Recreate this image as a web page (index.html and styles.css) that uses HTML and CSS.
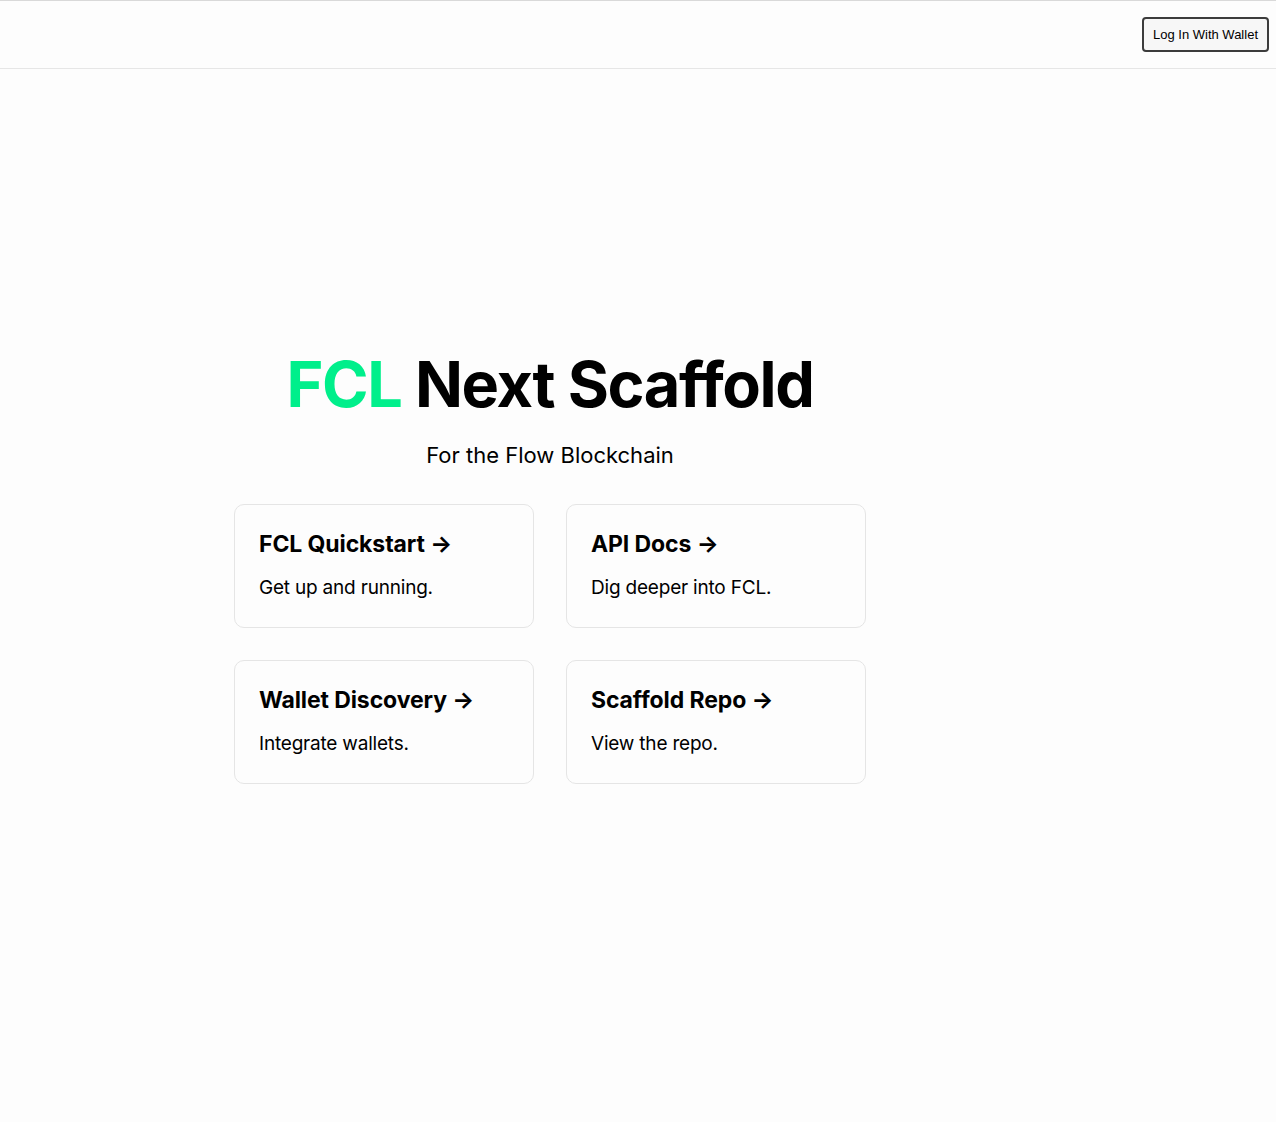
FILE: index.html
```html
<!DOCTYPE html>
<html lang="en">
<head>
<meta charset="utf-8">
<title>FCL Next Scaffold</title>
<link rel="stylesheet" href="styles.css">
</head>
<body>
<header class="navbar">
  <button class="login-btn" type="button">Log In With Wallet</button>
</header>
<div class="container">
  <main class="main">
    <h1 class="title"><span class="accent">FCL</span> Next Scaffold</h1>
    <p class="description">For the Flow Blockchain</p>
    <div class="grid">
      <a class="card" href="#">
        <h2>FCL Quickstart &rarr;</h2>
        <p>Get up and running.</p>
      </a>
      <a class="card" href="#">
        <h2>API Docs &rarr;</h2>
        <p>Dig deeper into FCL.</p>
      </a>
      <a class="card" href="#">
        <h2>Wallet Discovery &rarr;</h2>
        <p>Integrate wallets.</p>
      </a>
      <a class="card" href="#">
        <h2>Scaffold Repo &rarr;</h2>
        <p>View the repo.</p>
      </a>
    </div>
  </main>
</div>
</body>
</html>
```

FILE: styles.css
```css
* { box-sizing: border-box; }
html, body {
  margin: 0;
  padding: 0;
  background: #fdfdfd;
  color: #000;
  font-family: Inter, "Noto Sans", sans-serif;
}
.navbar {
  height: 69px;
  border-top: 1px solid #d9d9d9;
  border-bottom: 1px solid #e6e6e6;
  display: flex;
  justify-content: flex-end;
  align-items: flex-start;
  padding: 16px 7px 0 0;
}
.login-btn {
  font-family: "Liberation Sans", Arial, sans-serif;
  font-size: 13px;
  color: #000;
  background: #f7f7f7;
  border: 2px solid #3c3c3c;
  border-radius: 4px;
  height: 35px;
  width: 127px;
  padding: 0 6px;
  cursor: pointer;
}
.container {
  width: 1100px;
  display: flex;
  justify-content: center;
}
.main {
  padding-top: 279px;
  display: flex;
  flex-direction: column;
  align-items: center;
}
.title {
  margin: 0;
  font-size: 63px;
  line-height: 1.15;
  font-weight: 700;
  letter-spacing: -1.4px;
  text-align: center;
}
.accent { color: #00ef8b; }
.description {
  margin: 19px 0 0;
  font-size: 22px;
  line-height: 1.5;
  text-align: center;
}
.grid {
  margin-top: 32px;
  display: grid;
  grid-template-columns: 300px 300px;
  gap: 32px;
}
.card {
  display: block;
  padding: 24px;
  border: 1px solid #e5e5e5;
  border-radius: 10px;
  color: inherit;
  text-decoration: none;
  height: 124px;
}
.card h2 {
  margin: 0 0 14px;
  font-size: 23px;
  line-height: 30px;
  font-weight: 700;
  letter-spacing: -0.1px;
}
.card p {
  margin: 0;
  font-size: 19px;
  line-height: 30px;
  letter-spacing: -0.2px;
}
```
